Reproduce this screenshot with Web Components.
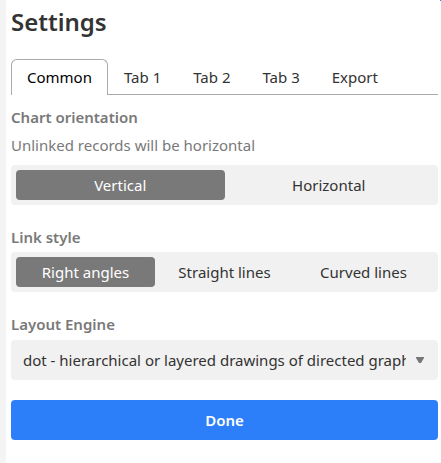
<!DOCTYPE html>
<html lang="en">
<head>
<meta charset="utf-8">
<meta name="viewport" content="width=device-width, initial-scale=1">
<title>Settings</title>
<style>
html, body { height: 100%; }
body { margin: 0; background: #fff; color: #333; font: 15px/20px "Noto Sans", "Open Sans", sans-serif;
  --muted: #797979; --field: #f1f1f1; --accent: #2d7ff9; --line: #aaa; }
</style>
</head>
<body>
<settings-panel heading="Settings">
  <tab-bar tabs="Common|Tab 1|Tab 2|Tab 3|Export"></tab-bar>
  <segmented-field label="Chart orientation" hint="Unlinked records will be horizontal" options="Vertical|Horizontal"></segmented-field>
  <segmented-field label="Link style" options="Right angles|Straight lines|Curved lines"></segmented-field>
  <select-field label="Layout Engine" options="dot - hierarchical or layered drawings of directed graphs"></select-field>
  <done-button>Done</done-button>
</settings-panel>
<script>
const list = (el, name) => (el.getAttribute(name) || '').split('|');

customElements.define('settings-panel', class extends HTMLElement {
  connectedCallback() {
    this.attachShadow({ mode: 'open' }).innerHTML = `
      <style>
        :host { display: flex; flex-direction: column; box-sizing: border-box; min-height: 100%;
          position: relative; padding: 4px 3px 20px 5px; border-left: 6px solid #f4f4f4; }
        h1 { margin: 0 0 19px; font-size: 24px; line-height: 36px; font-weight: 600; }
        .edge { position: absolute; top: 0; right: 0; width: 1px; height: 1px; background: var(--accent); }
      </style>
      <h1>${this.getAttribute('heading')}</h1>
      <slot></slot>
      <span class="edge"></span>`;
  }
});

customElements.define('tab-bar', class extends HTMLElement {
  connectedCallback() {
    this.attachShadow({ mode: 'open' }).innerHTML = `
      <style>
        :host { display: block; margin-bottom: 10px; }
        div { display: flex; border-bottom: 1px solid var(--line); }
        button { font: inherit; color: inherit; background: none; margin: 0 0 -1px; padding: 7px 15px 8px;
          border: 1px solid transparent; border-bottom: 0; border-radius: 6px 6px 0 0; white-space: nowrap; }
        button[aria-selected="true"] { color: #000; background: #fff; border-color: var(--line); }
      </style>
      <div role="tablist">${list(this, 'tabs').map((t, i) =>
        `<button type="button" role="tab" aria-selected="${i === 0}">${t}</button>`).join('')}</div>`;
    const tabs = [...this.shadowRoot.querySelectorAll('button')];
    tabs.forEach(t => t.addEventListener('click', () =>
      tabs.forEach(o => o.setAttribute('aria-selected', o === t))));
  }
});

customElements.define('segmented-field', class extends HTMLElement {
  connectedCallback() {
    const hint = this.getAttribute('hint');
    this.attachShadow({ mode: 'open' }).innerHTML = `
      <style>
        :host { display: block; margin-bottom: 20px; }
        fieldset { border: 0; margin: 0; padding: 0; min-width: 0; }
        legend { padding: 0; margin-bottom: 3px; line-height: 24px; font-weight: 600; color: var(--muted); }
        p { margin: 0 0 6px; line-height: 27px; color: var(--muted); }
        .track { display: flex; padding: 5px; border-radius: 4px; background: var(--field); }
        label { flex: 1 1 0; display: grid; }
        input { appearance: none; margin: 0; grid-area: 1 / 1; border-radius: 4px; }
        input:checked { background: var(--muted); }
        span { grid-area: 1 / 1; padding: 5px 0; text-align: center; white-space: nowrap; z-index: 1; }
        input:checked + span { color: #fff; }
      </style>
      <fieldset>
        <legend>${this.getAttribute('label')}</legend>
        ${hint ? `<p>${hint}</p>` : ''}
        <div class="track">${list(this, 'options').map((o, i) =>
          `<label><input type="radio" name="choice" ${i ? '' : 'checked'}><span>${o}</span></label>`).join('')}</div>
      </fieldset>`;
  }
});

customElements.define('select-field', class extends HTMLElement {
  connectedCallback() {
    this.attachShadow({ mode: 'open' }).innerHTML = `
      <style>
        :host { display: block; margin-bottom: 20px; }
        label { display: block; margin-bottom: 4px; line-height: 24px; font-weight: 600; color: var(--muted); }
        .box { display: grid; grid-template-columns: minmax(0, 1fr) 36px; align-items: center;
          border-radius: 4px; background: var(--field); }
        select { appearance: none; grid-area: 1 / 1 / 2 / 3; width: 100%; height: 40px; margin: 0;
          padding: 0 32px 0 12px; border: 0; border-radius: 4px; background: none; color: inherit; font: inherit;
          text-overflow: clip; }
        svg { grid-area: 1 / 2; justify-self: center; fill: #777; pointer-events: none; }
      </style>
      <label for="choice">${this.getAttribute('label')}</label>
      <div class="box">
        <select id="choice">${list(this, 'options').map(o => `<option>${o}</option>`).join('')}</select>
        <svg width="8" height="6" viewBox="0 0 8 6" aria-hidden="true"><path d="M0 0h8v1L5 6H3L0 1z"/></svg>
      </div>`;
  }
});

customElements.define('done-button', class extends HTMLElement {
  connectedCallback() {
    this.attachShadow({ mode: 'open' }).innerHTML = `
      <style>
        :host { display: block; }
        button { display: block; width: 100%; padding: 10px; border: 0; border-radius: 4px;
          background: var(--accent); color: #fff; font: inherit; font-weight: 600; }
      </style>
      <button type="button"><slot></slot></button>`;
  }
});
</script>
</body>
</html>
